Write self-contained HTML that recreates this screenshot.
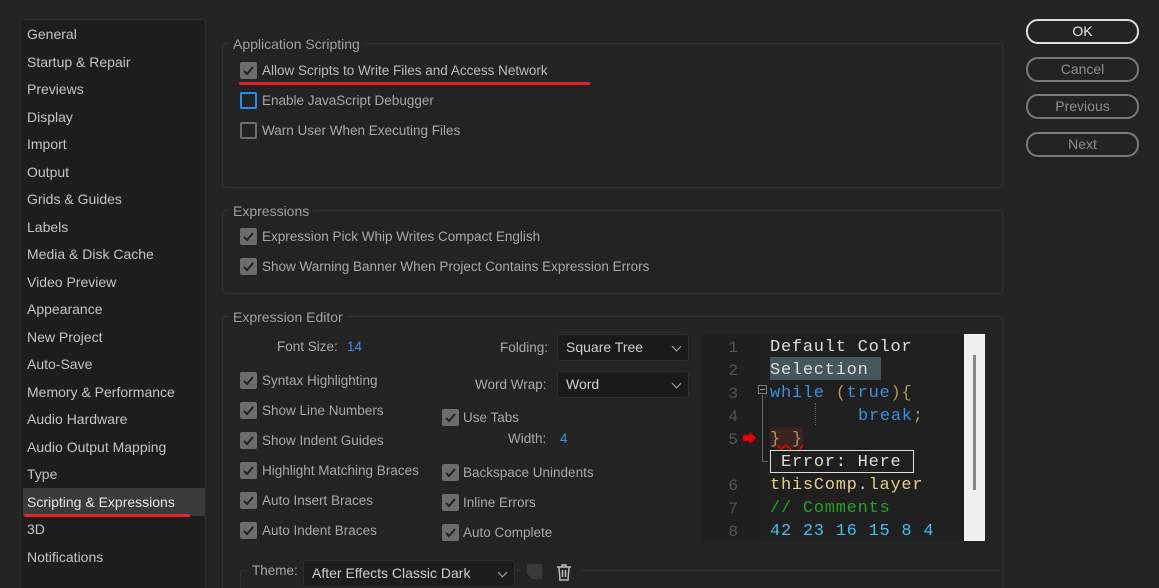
<!DOCTYPE html>
<html><head><meta charset="utf-8"><style>
*{margin:0;padding:0;box-sizing:border-box}
html,body{width:1159px;height:588px;overflow:hidden}
body{background:#232323;font-family:"Liberation Sans",sans-serif;font-size:13.5px;color:#a8a8a8;position:relative}
.a{position:absolute;white-space:nowrap}
.side{position:absolute;left:20px;top:19px;width:186px;height:580px;background:#1d1d1d;border:1px solid #2c2c2c;border-radius:3px}
.si{position:absolute;left:7px;color:#c4c4c4;font-size:14px}
.panel{position:absolute;left:222px;width:781px;border:1px solid #2f2f2f;border-radius:3px}
.pt{position:absolute;background:#232323;padding:0 4px;color:#a0a0a0;font-size:14px}
.cb{position:absolute;width:17px;height:17px;background:#6c6c6c;border-radius:2px}
.cb svg{position:absolute;left:2px;top:2px}
.cbo{position:absolute;width:17px;height:17px;border:2px solid #6c6c6c;border-radius:2px}
.btn{position:absolute;left:1026px;width:113px;height:25px;border:2px solid #7a7a7a;border-radius:12px;text-align:center;line-height:21px;color:#8c8c8c;font-size:14px}
.sel{position:absolute;height:27px;background:#1a1a1a;border:1px solid #2e2e2e;border-radius:3px;color:#cfcfcf;padding-left:8px;line-height:25px;font-size:14px}
.sel:after{content:"";position:absolute;right:8px;top:8px;width:6px;height:6px;border-right:1.5px solid #aaa;border-bottom:1.5px solid #aaa;transform:rotate(45deg)}
.code{font-family:"Liberation Mono",monospace;font-size:17px;letter-spacing:0.75px;position:absolute}
.ln{position:absolute;left:718px;width:20px;text-align:right;color:#555;font-family:"Liberation Mono",monospace;font-size:16px}
</style></head><body>
<div class="side">
<div style="position:absolute;left:2px;top:468px;width:182px;height:28px;background:#3a3a3a"></div>
<div style="position:absolute;left:3px;top:494px;width:166px;height:3px;background:#e0262b;border-radius:2px"></div>
</div>
<div class="si a" style="left:27px;top:26px">General</div>
<div class="si a" style="left:27px;top:54px">Startup &amp; Repair</div>
<div class="si a" style="left:27px;top:81px">Previews</div>
<div class="si a" style="left:27px;top:109px">Display</div>
<div class="si a" style="left:27px;top:136px">Import</div>
<div class="si a" style="left:27px;top:164px">Output</div>
<div class="si a" style="left:27px;top:191px">Grids &amp; Guides</div>
<div class="si a" style="left:27px;top:219px">Labels</div>
<div class="si a" style="left:27px;top:246px">Media &amp; Disk Cache</div>
<div class="si a" style="left:27px;top:274px">Video Preview</div>
<div class="si a" style="left:27px;top:301px">Appearance</div>
<div class="si a" style="left:27px;top:329px">New Project</div>
<div class="si a" style="left:27px;top:356px">Auto-Save</div>
<div class="si a" style="left:27px;top:384px">Memory &amp; Performance</div>
<div class="si a" style="left:27px;top:411px">Audio Hardware</div>
<div class="si a" style="left:27px;top:439px">Audio Output Mapping</div>
<div class="si a" style="left:27px;top:466px">Type</div>
<div class="si a" style="left:27px;top:494px;color:#e6e6e6">Scripting &amp; Expressions</div>
<div class="si a" style="left:27px;top:521px">3D</div>
<div class="si a" style="left:27px;top:549px">Notifications</div>

<div class="panel" style="top:43px;height:145px"></div>
<div class="pt a" style="left:229px;top:36px">Application Scripting</div>
<div class="cb" style="left:240px;top:62px"><svg width="13" height="13"><path d="M2 7 L5 10 L11 3" stroke="#222" stroke-width="2" fill="none"/></svg></div>
<div class="a" style="left:262px;top:63px;color:#bbb">Allow Scripts to Write Files and Access Network</div>
<div class="a" style="left:239px;top:82px;width:351px;height:3px;background:#e0262b;border-radius:2px"></div>
<div class="cbo" style="left:240px;top:92px;border-color:#2d8ceb"></div>
<div class="a" style="left:262px;top:93px">Enable JavaScript Debugger</div>
<div class="cbo" style="left:240px;top:122px"></div>
<div class="a" style="left:262px;top:123px">Warn User When Executing Files</div>

<div class="panel" style="top:210px;height:84px"></div>
<div class="pt a" style="left:229px;top:203px">Expressions</div>
<div class="cb" style="left:240px;top:228px"><svg width="13" height="13"><path d="M2 7 L5 10 L11 3" stroke="#222" stroke-width="2" fill="none"/></svg></div>
<div class="a" style="left:262px;top:229px">Expression Pick Whip Writes Compact English</div>
<div class="cb" style="left:240px;top:258px"><svg width="13" height="13"><path d="M2 7 L5 10 L11 3" stroke="#222" stroke-width="2" fill="none"/></svg></div>
<div class="a" style="left:262px;top:259px">Show Warning Banner When Project Contains Expression Errors</div>

<div class="panel" style="top:316px;height:290px"></div>
<div class="pt a" style="left:229px;top:309px">Expression Editor</div>
<div class="a" style="left:277px;top:339px">Font Size:</div>
<div class="a" style="left:347px;top:339px;color:#3d8fe0">14</div>
<div class="a" style="left:500px;top:340px">Folding:</div>
<div class="sel a" style="left:557px;top:334px;width:132px">Square Tree</div>
<div class="a" style="left:475px;top:377px">Word Wrap:</div>
<div class="sel a" style="left:557px;top:371px;width:132px">Word</div>
<div class="a" style="left:508px;top:431px">Width:</div>
<div class="a" style="left:560px;top:431px;color:#3d8fe0">4</div>

<div class="cb" style="left:240px;top:372px"><svg width="13" height="13"><path d="M2 7 L5 10 L11 3" stroke="#222" stroke-width="2" fill="none"/></svg></div><div class="a" style="left:262px;top:373px">Syntax Highlighting</div>
<div class="cb" style="left:240px;top:402px"><svg width="13" height="13"><path d="M2 7 L5 10 L11 3" stroke="#222" stroke-width="2" fill="none"/></svg></div><div class="a" style="left:262px;top:403px">Show Line Numbers</div>
<div class="cb" style="left:240px;top:432px"><svg width="13" height="13"><path d="M2 7 L5 10 L11 3" stroke="#222" stroke-width="2" fill="none"/></svg></div><div class="a" style="left:262px;top:433px">Show Indent Guides</div>
<div class="cb" style="left:240px;top:462px"><svg width="13" height="13"><path d="M2 7 L5 10 L11 3" stroke="#222" stroke-width="2" fill="none"/></svg></div><div class="a" style="left:262px;top:463px">Highlight Matching Braces</div>
<div class="cb" style="left:240px;top:492px"><svg width="13" height="13"><path d="M2 7 L5 10 L11 3" stroke="#222" stroke-width="2" fill="none"/></svg></div><div class="a" style="left:262px;top:493px">Auto Insert Braces</div>
<div class="cb" style="left:240px;top:522px"><svg width="13" height="13"><path d="M2 7 L5 10 L11 3" stroke="#222" stroke-width="2" fill="none"/></svg></div><div class="a" style="left:262px;top:523px">Auto Indent Braces</div>
<div class="cb" style="left:442px;top:409px"><svg width="13" height="13"><path d="M2 7 L5 10 L11 3" stroke="#222" stroke-width="2" fill="none"/></svg></div><div class="a" style="left:463px;top:410px">Use Tabs</div>
<div class="cb" style="left:442px;top:464px"><svg width="13" height="13"><path d="M2 7 L5 10 L11 3" stroke="#222" stroke-width="2" fill="none"/></svg></div><div class="a" style="left:463px;top:465px">Backspace Unindents</div>
<div class="cb" style="left:442px;top:494px"><svg width="13" height="13"><path d="M2 7 L5 10 L11 3" stroke="#222" stroke-width="2" fill="none"/></svg></div><div class="a" style="left:463px;top:495px">Inline Errors</div>
<div class="cb" style="left:442px;top:524px"><svg width="13" height="13"><path d="M2 7 L5 10 L11 3" stroke="#222" stroke-width="2" fill="none"/></svg></div><div class="a" style="left:463px;top:525px">Auto Complete</div>

<div class="a" style="left:240px;top:570px;width:763px;height:30px;border:1px solid #2f2f2f;border-radius:3px"></div>
<div class="a" style="left:248px;top:563px;background:#232323;padding:0 4px">Theme:</div>
<div class="sel a" style="left:303px;top:560px;width:212px;background:#1c1c1c">After Effects Classic Dark</div>
<div class="a" style="left:521px;top:566px;width:60px;height:10px;background:#232323"></div>
<div class="a" style="left:527px;top:564px;width:15px;height:15px;background:#3a3a3a;clip-path:polygon(0 0,100% 0,100% 100%,35% 100%,0 65%)"></div>
<svg class="a" style="left:556px;top:564px" width="16" height="17"><path d="M1 3H15M6 3V1H10V3M3 3L4 16H12L13 3M6.5 6V13M9.5 6V13" stroke="#bbb" stroke-width="1.5" fill="none"/></svg>

<!-- code editor -->
<div class="a" style="left:703px;top:334px;width:282px;height:207px;background:#1e1e1e"></div>
<div class="a" style="left:756px;top:334px;width:208px;height:207px;background:#1f1f1f"></div>
<div class="a" style="left:964px;top:334px;width:21px;height:207px;background:#f0f0f0"></div>
<div class="a" style="left:973px;top:355px;width:3px;height:135px;background:#888"></div>
<div class="ln a" style="top:339px">1</div><div class="ln a" style="top:362px">2</div><div class="ln a" style="top:385px">3</div><div class="ln a" style="top:408px">4</div><div class="ln a" style="top:431px">5</div><div class="ln a" style="top:477px">6</div><div class="ln a" style="top:500px">7</div><div class="ln a" style="top:523px">8</div>
<div class="a" style="left:743px;top:432px;width:13px;height:12px;background:#e00;clip-path:polygon(0 25%,50% 25%,50% 0,100% 50%,50% 100%,50% 75%,0 75%)"></div>
<div class="a" style="left:758px;top:385px;width:9px;height:9px;border:1px solid #777"></div>
<div class="a" style="left:760px;top:389px;width:5px;height:1px;background:#999"></div>
<div class="a" style="left:762px;top:395px;width:1px;height:67px;background:#666"></div>
<div class="a" style="left:762px;top:461px;width:6px;height:1px;background:#666"></div>
<div class="a" style="left:815px;top:403px;width:1px;height:22px;border-left:1px dotted #666"></div>
<div class="a" style="left:770px;top:357px;width:111px;height:23px;background:#46575b"></div>
<div class="a" style="left:770px;top:427px;width:33px;height:21px;background:#3a2222"></div>
<div class="a" style="left:770px;top:450px;width:144px;height:23px;border:1.5px solid #ddd"></div>
<div class="code a" style="left:770px;top:338px;color:#ddd">Default Color</div>
<div class="code a" style="left:770px;top:361px;color:#ddd">Selection</div>
<div class="code a" style="left:770px;top:384px"><span style="color:#3b8ee0">while</span> <span style="color:#a89a52">(</span><span style="color:#3b8ee0">true</span><span style="color:#a89a52">){</span></div>
<div class="code a" style="left:858px;top:407px;color:#3b8ee0">break<span style="color:#a89a52">;</span></div>
<div class="code a" style="left:770px;top:430px;color:#a89a52;text-decoration:underline wavy #e00">} }</div>
<div class="code a" style="left:781px;top:453px;color:#ddd">Error: Here</div>
<div class="code a" style="left:770px;top:476px;color:#e6cc88">thisComp<span style="color:#ccc">.</span>layer</div>
<div class="code a" style="left:770px;top:499px;color:#28a028">// Comments</div>
<div class="code a" style="left:770px;top:522px;color:#3ec0f0">42 23 16 15 8 4</div>

<div class="btn" style="top:19px;border-color:#ddd;color:#e8e8e8">OK</div>
<div class="btn" style="top:57px">Cancel</div>
<div class="btn" style="top:94px">Previous</div>
<div class="btn" style="top:132px">Next</div>
</body></html>
